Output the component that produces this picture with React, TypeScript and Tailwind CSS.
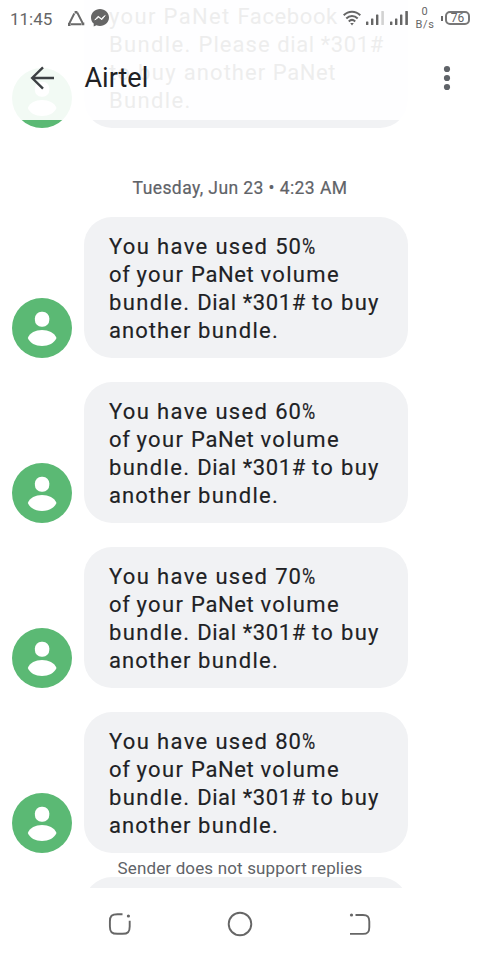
import clsx from "clsx";

type Word = [text: string, spacing: "tight" | "normal" | "wide"];

const usage = [50, 60, 70, 80];

const earlier: Word[][] = [
  [["your", "wide"], ["PaNet", "wide"], ["Facebook", "tight"]],
  [["Bundle.", "wide"], ["Please", "normal"], ["dial", "tight"], ["*301#", "tight"]],
  [["to", "wide"], ["buy", "wide"], ["another", "normal"], ["PaNet", "tight"]],
  [["Bundle.", "wide"]],
];

function usageLines(percent: number): Word[][] {
  return [
    [["You", "wide"], ["have", "wide"], ["used", "wide"], [`${percent}%`, "normal"]],
    [["of", "tight"], ["your", "wide"], ["PaNet", "tight"], ["volume", "wide"]],
    [["bundle.", "wide"], ["Dial", "tight"], ["*301#", "tight"], ["to", "wide"], ["buy", "wide"]],
    [["another", "normal"], ["bundle.", "wide"]],
  ];
}

function MessageLine({ words }: { words: Word[] }) {
  return (
    <p className="h-7 whitespace-pre">
      {words.map(([text, spacing], i) => (
        <span
          key={i}
          className={clsx(
            spacing === "tight" && "tracking-[0.6px]",
            spacing === "normal" && "tracking-[1.05px]",
            spacing === "wide" && "tracking-[1.35px]"
          )}
        >
          {text.replace("%", "")}
          {text.endsWith("%") && <span className="inline-block origin-left scale-x-[0.82]">%</span>}
          {i < words.length - 1 && " "}
        </span>
      ))}
    </p>
  );
}

function Avatar() {
  return (
    <svg viewBox="0 0 60 60" className="size-[60px] shrink-0">
      <circle cx="30" cy="30" r="30" fill="#5bb974" />
      <rect x="22.900" y="13.700" width="14.400" height="15" rx="6.600" fill="#fff" />
      <path d="M15.800 40C17.800 34.800 23.500 32 30 32s12.500 2.800 14.500 8C42.500 45 36.500 48 30 48S17.800 45 15.800 40Z" fill="#fff" />
    </svg>
  );
}

function Message({ lines, className }: { lines: Word[][]; className?: string }) {
  return (
    <div className="flex shrink-0 items-end gap-3 pl-3">
      <Avatar />
      <div
        className={clsx(
          "flex w-[324px] flex-col justify-end rounded-[28px] bg-[#f1f2f4] pb-[13px] pl-[25px] text-[22px] leading-7 text-[#202124] [-webkit-text-stroke:0.15px]",
          className
        )}
      >
        {lines.map((words, i) => (
          <MessageLine key={i} words={words} />
        ))}
      </div>
    </div>
  );
}

function Signal({ weak }: { weak?: boolean }) {
  return (
    <svg viewBox="0 0 20 16" className="h-4 w-5" fill="#666">
      <rect x="1" y="11.500" width="2.400" height="3.500" rx="0.600" />
      <rect x="6" y="8.500" width="2.400" height="6.500" rx="0.600" />
      <rect x="11" y="4.500" width="2.400" height="10.500" rx="0.600" />
      <rect x="16.300" y="1" width="2.600" height="14" rx="0.600" fill={weak ? "#d2d2d2" : "#666"} />
    </svg>
  );
}

function StatusBar() {
  return (
    <div className="flex h-9 items-center text-[#666]">
      <span className="w-[57px] pt-px pl-[10px] text-[17px] leading-9">11:45</span>
      <svg viewBox="0 0 18 17" className="ml-[10px] h-[17px] w-[18px]" fill="none" stroke="#6a6a6a" strokeWidth="1.900">
        <path d="M7.300 3.500 2 14M10.200 2.500l5.400 10.500M4 14.300h10.500" />
        <path d="M9 1v2.500M1 14.500h2.600M14.800 13.800h2.500" strokeWidth="2.800" />
      </svg>
      <svg viewBox="0 0 18 18" className="ml-[6px] size-[18px]">
        <path d="M9 0C4 0 0 3.700 0 8.500c0 2.600 1 4.600 2.700 6.100V17.500l2.700-1.300C6.500 16.800 7.700 17 9 17c5 0 9-3.700 9-8.500S14 0 9 0Z" fill="#666" />
        <path d="M3.800 11 7.200 7.200 10.300 9.700 14.200 6.500 10.800 10.700 7.700 8.200Z" fill="#fff" stroke="#fff" strokeWidth="0.900" strokeLinejoin="round" />
      </svg>
      <svg viewBox="0 0 18 16" className="ml-[234px] h-4 w-[18px]" fill="none" stroke="#666" strokeWidth="2">
        <path d="M.7 5.300C5.500.5 12.500.5 17.300 5.300M3.300 8.500c3.300-3.300 8.100-3.300 11.400 0M5.800 11.500c1.900-1.900 4.500-1.900 6.400 0" />
        <path d="m7.200 13 1.800 2.500 1.800-2.500Z" fill="#666" stroke="none" />
      </svg>
      <div className="ml-1 flex gap-1">
        <Signal weak />
        <Signal />
      </div>
      <div className="ml-[6px] flex w-5 flex-col items-center text-[11px] leading-[13px] tracking-[0.600px]">
        <span>0</span>
        <span>B/s</span>
      </div>
      <div className="ml-[6px] flex items-center gap-[2px]">
        <span className="h-[5px] w-[2px] bg-[#666]" />
        <span className="flex h-[14px] w-[25px] items-center justify-center rounded-[5px] border-2 border-[#777] text-[12px] leading-none">
          76
        </span>
      </div>
    </div>
  );
}

function Header() {
  return (
    <header className="absolute inset-x-0 top-0 h-[120px] bg-white/92">
      <StatusBar />
      <div className="flex h-[84px] items-center pl-[30px]">
        <svg viewBox="0 0 24 24" className="size-6" fill="none" stroke="#3c4043" strokeWidth="2.400">
          <path d="M13 1.300 2.200 12 13 22.700M2 12h22" />
        </svg>
        <h1 className="ml-[30.500px] text-[27px] leading-9 text-[#202124]">Airtel</h1>
        <svg viewBox="0 0 6 24" className="mr-[30px] ml-auto h-6 w-1.5 overflow-visible" fill="#5f6368">
          <circle cx="3" cy="3" r="3.100" />
          <circle cx="3" cy="12" r="3.100" />
          <circle cx="3" cy="21" r="3.100" />
        </svg>
      </div>
    </header>
  );
}

function NavBar() {
  return (
    <nav className="flex h-[72px] items-center justify-center gap-24 bg-white">
      <svg viewBox="0 0 24 24" className="size-6" fill="none" stroke="#666" strokeWidth="1.900">
        <path d="M14.500 2.200H9.500C3.700 2.200 1.900 4 1.900 9.500v5c0 5.500 1.800 7.300 7.600 7.300h5c5.400 0 7.200-1.800 7.200-7.300V8.800" />
        <circle cx="20.400" cy="4" r="1.600" fill="#666" stroke="none" />
      </svg>
      <svg viewBox="0 0 24 24" className="size-6 overflow-visible" fill="none" stroke="#666" strokeWidth="1.900">
        <circle cx="12" cy="12" r="11.300" />
      </svg>
      <svg viewBox="0 0 24 24" className="size-6" fill="none" stroke="#666" strokeWidth="1.900">
        <path d="M7.500 3H15c4.800 0 6.300 1.800 6.300 6.500v5.700c0 4.800-1.500 6.700-6.300 6.700H2" />
        <circle cx="3.500" cy="3" r="1.600" fill="#666" stroke="none" />
      </svg>
    </nav>
  );
}

export default function App() {
  return (
    <div className="h-[960px] w-[480px] overflow-hidden bg-white font-['Roboto',sans-serif]">
      <main className="relative h-[888px] overflow-hidden">
        <div className="-mt-12 flex flex-col">
          <Message lines={earlier} className="h-44" />
          <p className="mt-12 mb-[17px] text-center text-[17.500px] leading-6 tracking-[0.420px] text-[#5f6368] [-webkit-text-stroke:0.2px]">
            Tuesday, Jun 23 • 4:23 AM
          </p>
          <div className="flex flex-col gap-6">
            {usage.map((percent) => (
              <Message key={percent} lines={usageLines(percent)} className="h-[141px]" />
            ))}
            <div className="ml-[84px] h-[141px] w-[324px] shrink-0 rounded-[28px] bg-[#f1f2f4]" />
          </div>
        </div>
        <Header />
        <p className="absolute inset-x-0 bottom-2 text-center text-[17px] leading-6 tracking-[0.150px] text-[#5f6368]">
          Sender does not support replies
        </p>
      </main>
      <NavBar />
    </div>
  );
}
